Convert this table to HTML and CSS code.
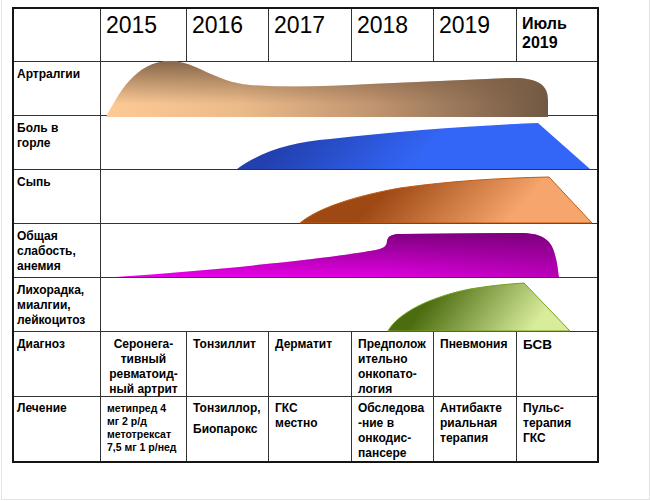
FILE: index.html
```html
<!DOCTYPE html>
<html lang="ru">
<head>
<meta charset="utf-8">
<title>Хронология</title>
<link rel="stylesheet" href="styles.css">
</head>
<body>
<div class="page">
  <div class="chart">
    <div class="grid">
      <div class="cell"></div>
      <div class="cell year">2015</div>
      <div class="cell year">2016</div>
      <div class="cell year">2017</div>
      <div class="cell year">2018</div>
      <div class="cell year">2019</div>
      <div class="cell month">Июль<br>2019</div>

      <div class="cell label">Артралгии</div><div class="cell span"></div>
      <div class="cell label">Боль в<br>горле</div><div class="cell span"></div>
      <div class="cell label">Сыпь</div><div class="cell span"></div>
      <div class="cell label">Общая<br>слабость,<br>анемия</div><div class="cell span"></div>
      <div class="cell label">Лихорадка,<br>миалгии,<br>лейкоцитоз</div><div class="cell span"></div>

      <div class="cell label">Диагноз</div>
      <div class="cell text center">Серонега-<br>тивный<br>ревматоид-<br>ный артрит</div>
      <div class="cell text">Тонзиллит</div>
      <div class="cell text">Дерматит</div>
      <div class="cell text">Предполож<br>ительно<br>онкопато-<br>логия</div>
      <div class="cell text">Пневмония</div>
      <div class="cell text big">БСВ</div>

      <div class="cell label low">Лечение</div>
      <div class="cell small low">метипред 4<br>мг 2 р/д<br>метотрексат<br>7,5 мг 1 р/нед</div>
      <div class="cell text low"><div>Тонзиллор,</div><div class="gapline">Биопарокс</div></div>
      <div class="cell text low">ГКС<br>местно</div>
      <div class="cell text low">Обследова<br>-ние в<br>онкодис-<br>пансере</div>
      <div class="cell text low">Антибакте<br>риальная<br>терапия</div>
      <div class="cell text low">Пульс-<br>терапия<br>ГКС</div>
    </div>

    <svg class="overlay" width="587" height="456" viewBox="12 7 587 456" xmlns="http://www.w3.org/2000/svg">
      <defs>
        <linearGradient id="tanH" gradientUnits="userSpaceOnUse" x1="106" y1="0" x2="548" y2="0">
          <stop offset="0" stop-color="#fdca96"/>
          <stop offset="0.3" stop-color="#ecbb8a"/>
          <stop offset="0.6" stop-color="#c19570"/>
          <stop offset="1" stop-color="#715843"/>
        </linearGradient>
        <linearGradient id="tanV" gradientUnits="userSpaceOnUse" x1="0" y1="61" x2="0" y2="104">
          <stop offset="0" stop-color="#7a5c42" stop-opacity="0.9"/>
          <stop offset="1" stop-color="#7a5c42" stop-opacity="0"/>
        </linearGradient>
        <linearGradient id="blue" gradientUnits="userSpaceOnUse" x1="300" y1="125" x2="380" y2="200">
          <stop offset="0" stop-color="#2240b0"/>
          <stop offset="1" stop-color="#3366f6"/>
        </linearGradient>
        <linearGradient id="orange" gradientUnits="userSpaceOnUse" x1="400" y1="175" x2="480" y2="250">
          <stop offset="0" stop-color="#9e4813"/>
          <stop offset="1" stop-color="#f6a56c"/>
        </linearGradient>
        <linearGradient id="magH" gradientUnits="userSpaceOnUse" x1="116" y1="0" x2="558" y2="0">
          <stop offset="0" stop-color="#f400f4"/>
          <stop offset="0.6" stop-color="#e600e6"/>
          <stop offset="1" stop-color="#c000c0"/>
        </linearGradient>
        <linearGradient id="magV" gradientUnits="userSpaceOnUse" x1="0" y1="233" x2="0" y2="280">
          <stop offset="0" stop-color="#7a007a" stop-opacity="0.95"/>
          <stop offset="1" stop-color="#7a007a" stop-opacity="0"/>
        </linearGradient>
        <linearGradient id="green" gradientUnits="userSpaceOnUse" x1="440" y1="285" x2="520" y2="345">
          <stop offset="0" stop-color="#4c6c10"/>
          <stop offset="1" stop-color="#d8ec9c"/>
        </linearGradient>
      </defs>

      <path d="M106,117 C118,95 135,61 170,61 C196,61 214,82 250,85 C290,88 330,86 370,84 L512,78 C540,78 548,86 548,100 L548,117 Z" fill="url(#tanH)"/>
      <path d="M106,117 C118,95 135,61 170,61 C196,61 214,82 250,85 C290,88 330,86 370,84 L512,78 C540,78 548,86 548,100 L548,117 Z" fill="url(#tanV)"/>

      <path d="M237,169 C262,151 292,142 330,139 C400,131 480,125 538,123 L590,169 Z" fill="url(#blue)"/>

      <path d="M300,223 C318,208 355,196 400,188 C450,181 500,178 549,177 L592,223 Z" fill="url(#orange)" stroke="#c05a14" stroke-width="1"/>

      <path d="M116,277 C220,270 330,258 370,251 C383,249 387,247 387,241 C388,236 392,234 400,234 L520,233 C545,233 552,242 555,255 C558,265 558,272 559,277 Z" fill="url(#magH)"/>
      <path d="M116,277 C220,270 330,258 370,251 C383,249 387,247 387,241 C388,236 392,234 400,234 L520,233 C545,233 552,242 555,255 C558,265 558,272 559,277 Z" fill="url(#magV)"/>

      <path d="M388,331 C398,313 430,297 470,289 C495,285 510,284 524,283 L570,331 Z" fill="url(#green)" stroke="#76a020" stroke-width="1"/>
    </svg>
  </div>
</div>
</body>
</html>
```

FILE: styles.css
```css
html, body {
  margin: 0;
  padding: 0;
  background: #ffffff;
}

body {
  font-family: "Liberation Sans", Arial, sans-serif;
  color: #000;
}

.page {
  box-sizing: border-box;
  width: 649px;
  height: 500px;
  margin-left: 1px;
  border: 1px solid #e4e4e4;
  border-top: none;
  padding: 7px 0 0 10px;
}

.chart {
  position: relative;
  width: max-content;
}

.grid {
  display: grid;
  grid-template-columns: 86px 85px 81px 82px 81px 82px 80px;
  grid-template-rows: 52px repeat(5, 53px) 64px 64px;
  gap: 1px;
  background: #333;
  border: 2px solid #151515;
}

.cell {
  background: #fff;
  white-space: nowrap;
}

.year {
  font-size: 23px;
  padding: 3px 0 0 5px;
}

.month {
  font-size: 16px;
  line-height: 19px;
  font-weight: bold;
  padding: 5px 0 0 5px;
}

.label {
  font-size: 12px;
  line-height: 15px;
  font-weight: bold;
  padding: 5px 0 0 3px;
}

.span {
  grid-column: span 6;
}

.text {
  font-size: 12px;
  line-height: 15px;
  font-weight: bold;
  padding: 5px 0 0 6px;
}

.center {
  text-align: center;
  padding-left: 0;
}

.big {
  font-size: 13.5px;
}

.small {
  font-size: 10.5px;
  line-height: 13px;
  font-weight: bold;
  padding: 6px 0 0 6px;
}

.low {
  padding-top: 4px;
}

.small.low {
  padding-top: 5px;
}

.gapline {
  margin-top: 6px;
}

.overlay {
  position: absolute;
  left: 0;
  top: 0;
  pointer-events: none;
}
```
